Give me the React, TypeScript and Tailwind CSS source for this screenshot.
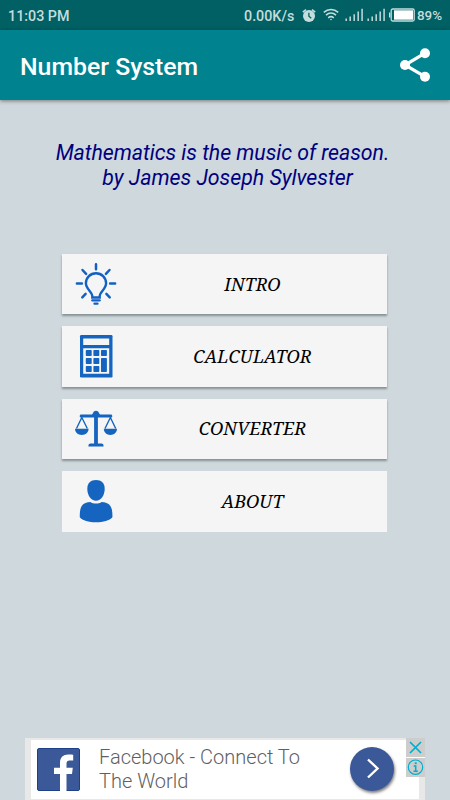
import type { ReactNode } from "react";

function BulbIcon() {
  return (
    <svg viewBox="0 0 42 44" className="w-[42px] h-[44px]" fill="none" stroke="#1260c4" strokeWidth="2.5" strokeLinecap="round">
      <path d="M21 2.2v5M1.9 21.5h5M35.1 21.5h5M7.5 8l3.6 3.8M34.5 8l-3.6 3.8M7.3 35.3l3.3-3.4M34.7 35.3l-3.3-3.4" />
      <path d="M17.3 35.5v-1.8c0-3.7-6.4-6.6-6.4-12.4a10.1 10.1 0 0 1 20.2 0c0 5.8-6.4 8.7-6.4 12.4v1.8z" strokeWidth="2.4" />
      <path d="M17.3 38.4h7.4M19.5 41.7h3" strokeWidth="2.3" />
    </svg>
  );
}

function CalculatorIcon() {
  return (
    <svg viewBox="0 0 42 44" className="w-[42px] h-[44px]">
      <rect x="5" y="0" width="32.5" height="42.5" rx="1.2" fill="#1565c0" />
      <path d="M8.2 3.6h26v6.4h-26zM8.2 13.2h26v25.6h-26z" fill="#f5f5f5" />
      <g fill="#1565c0">
        <rect x="10.8" y="15" width="5.9" height="6" rx=".7" />
        <rect x="18.4" y="15" width="5.9" height="6" rx=".7" />
        <rect x="26" y="15" width="5.9" height="6" rx=".7" />
        <rect x="10.8" y="23" width="5.9" height="6" rx=".7" />
        <rect x="18.4" y="23" width="5.9" height="6" rx=".7" />
        <rect x="10.8" y="31" width="5.9" height="6" rx=".7" />
        <rect x="18.4" y="31" width="5.9" height="6" rx=".7" />
        <rect x="26" y="23" width="5.9" height="14" rx=".7" />
      </g>
    </svg>
  );
}

function ScalesIcon() {
  return (
    <svg viewBox="0 0 42 44" className="w-[42px] h-[44px]" fill="#1565c0">
      <path d="M4.7 9.2c0-1 .6-1.6 1.5-1.6H16c1 0 1.5-.6 2-1.7.6-1.4 1.6-2.2 3-2.2s2.4.8 3 2.2c.5 1.1 1 1.7 2 1.7h9.8c.9 0 1.5.6 1.5 1.6s-.6 1.2-1.5 1.2H22.9V36.6h3.7c1.2 0 2 .9 2 2.9H13.4c0-2 .8-2.9 2-2.9h3.7V10.4H6.2c-.9 0-1.5-.2-1.5-1.2z" />
      <path d="M0 21.8h13.6c0 3.5-3 6.2-6.8 6.2S0 25.3 0 21.8zM28.8 21.8h13.2c0 3.5-3 6.2-6.6 6.2s-6.6-2.7-6.6-6.2z" />
      <path d="M1.5 21.5L6.8 10.5l5.5 11M30 21.5l5.4-11 5.3 11" fill="none" stroke="#1565c0" strokeWidth="1.4" />
    </svg>
  );
}

function PersonIcon() {
  return (
    <svg viewBox="0 0 42 44" className="w-[42px] h-[44px]" fill="#1565c0">
      <path d="M21 1c5.4 0 8.7 3 8.7 8.7 0 6.500-3.700 12-8.700 12s-8.700-5.500-8.700-12C12.300 4 15.600 1 21 1z" />
      <path d="M15.3 22.9c3.300 2 8.100 2 11.400 0 6.500.4 9.300 3.300 10.200 7.900.5 2.600.6 5.300.5 7.500-3 3.200-9 5-16.400 5S7.600 41.500 4.800 38.300c-.1-2.200 0-4.900.5-7.500.9-4.600 3.500-7.500 10-7.900z" />
    </svg>
  );
}

function SignalBars() {
  return (
    <svg viewBox="0 0 18 14" className="w-[18px] h-[14px]" stroke="#b4d3d4" strokeWidth="1.6">
      <path d="M1.2 13v-2.5M5.2 13v-4.5M9.2 13V6.3M13.2 13V3.5M17.1 13V.8" />
    </svg>
  );
}

function StatusBar() {
  return (
    <div className="flex h-[30px] items-center bg-[#006064] pl-2 font-medium text-[#c4dddd]">
      <span className="w-[236px] pt-[3px] text-[14.3px]">11:03 PM</span>
      <span className="w-[57px] pt-[3px] whitespace-nowrap text-[14.3px]">0.00K/s</span>
      <svg viewBox="0 0 14 15" className="ml-[1px] h-[15px] w-[14px]">
        <circle cx="7" cy="8" r="6" fill="#c4dddd" />
        <path d="M.8 4.2L4 1.6M13.2 4.2L10 1.6" stroke="#c4dddd" strokeWidth="1.6" />
        <path d="M6.9 4.8V8.2l2.400 2" stroke="#006064" strokeWidth="1.3" fill="none" />
      </svg>
      <svg viewBox="0 0 16 14" className="mr-[6px] ml-[7px] h-[14px] w-[16px]" fill="none" stroke="#c4dddd" strokeWidth="1.5">
        <path d="M.8 4.4c4.200-4 10.200-4 14.400 0M3 7.100c3-2.700 7-2.700 10 0M5.200 9.800c1.800-1.500 3.800-1.500 5.600 0" />
        <circle cx="8" cy="11.5" r=".8" fill="#c4dddd" stroke="none" />
      </svg>
      <SignalBars />
      <span className="w-[4px]" />
      <SignalBars />
      <svg viewBox="0 0 26 14" className="ml-[4px] h-[14px] w-[26px]">
        <rect x="2.2" y="1" width="23" height="12" rx="1.5" fill="none" stroke="#c4dddd" strokeWidth="1.3" />
        <path d="M.7 4.5v5" stroke="#c4dddd" strokeWidth="1.4" />
        <rect x="5" y="2.3" width="19" height="9.4" fill="#fff" />
      </svg>
      <span className="ml-[2px] pt-[2px] text-[13.4px]">89%</span>
    </div>
  );
}

function MenuButton({ label, icon }: { label: string; icon: ReactNode }) {
  return (
    <button className="flex h-[60.4px] w-[325px] items-center bg-[#f5f5f5] pl-[13px] shadow-[0_2px_2px_rgba(60,75,80,0.5)] last:shadow-none">
      {icon}
      <span className="flex-1 pl-px text-center font-['Noto_Serif','Liberation_Serif',serif] text-[18px] text-black italic">
        {label}
      </span>
    </button>
  );
}

function AdBanner() {
  return (
    <div className="relative flex h-[62px] w-[400px] border-x-[6px] border-t-[2px] border-b border-[#e8e8e8] bg-white">
      <svg viewBox="0 0 43 43" className="mt-[8px] ml-[6px] h-[43px] w-[43px]">
        <rect x=".5" y=".5" width="42" height="42" rx="1.5" fill="#3b5998" stroke="#1f3f86" />
        <path d="M23 43V26h-6v-6.300h6v-5c0-5.500 3.300-8.300 8.300-8.300 2.300 0 4.300.2 4.900.3v5.900h-3.500c-2.700 0-3.200 1.300-3.200 3.200v3.900h6.300L35 26h-5.500v17z" fill="#fff" />
      </svg>
      <p className="mt-[5px] ml-[19px] w-[235px] text-[20px] leading-[24px] font-light text-[#5f5f5f]">
        Facebook - Connect To
        <br />
        The World
      </p>
      <div className="mt-[7px] ml-[16px] flex h-[44px] w-[44px] items-center justify-center rounded-full bg-[#3b5998] shadow-[1px_2px_3px_rgba(0,0,0,0.5)]">
        <svg viewBox="0 0 14 22" className="ml-[2px] h-[22px] w-[14px]" fill="none" stroke="#fff" strokeWidth="2.4">
          <path d="M2 1.5L11.5 10.5 2 19.5" />
        </svg>
      </div>
      <div className="absolute -top-[2px] -right-[6px] flex w-[19px] flex-col gap-px bg-white">
        <svg viewBox="0 0 19 19" className="h-[19px] w-[19px] bg-[#cdcdcd]" stroke="#00aecd" strokeWidth="1.7">
          <path d="M4 4l11 11M15 4L4 15" />
        </svg>
        <svg viewBox="0 0 19 19" className="h-[19px] w-[19px] bg-[#cdcdcd]" fill="none" stroke="#00aecd">
          <circle cx="9.5" cy="9.2" r="7.2" strokeWidth="1.2" />
          <path d="M7.7 8h2v5.2M7.5 13.3h4.3" strokeWidth="1.5" />
          <path d="M8.7 5.2h2" strokeWidth="1.9" />
        </svg>
      </div>
    </div>
  );
}

export default function App() {
  return (
    <div className="flex h-[800px] w-[450px] flex-col overflow-hidden bg-[#cfd8dc] font-['Roboto',sans-serif]">
      <StatusBar />
      <header className="flex h-[70px] items-center justify-between bg-[#00838f] pr-[20px] pl-5 shadow-[0_1px_4px_rgba(0,0,0,0.45)]">
        <h1 className="pt-[3px] text-[24.8px] font-medium text-white">Number System</h1>
        <svg viewBox="0 0 30 34" className="h-[34px] w-[30px]" fill="#fff">
          <path d="M25 5.2L5 17l20 11.7" fill="none" stroke="#fff" strokeWidth="3.2" />
          <circle cx="25" cy="5.2" r="5" />
          <circle cx="5" cy="17" r="5" />
          <circle cx="25" cy="28.7" r="5" />
        </svg>
      </header>

      {/* Quote */}
      <p className="mt-[40px] pl-[5px] text-center text-[21.3px] leading-[25px] text-[#000080] italic">
        <span className="mr-[10px] tracking-[-0.04px]">Mathematics is the music of reason.</span>
        <br />
        by James Joseph Sylvester
      </p>

      {/* Menu */}
      <nav className="mt-[64px] flex flex-1 flex-col items-center gap-[12px] pr-px">
        <MenuButton label="INTRO" icon={<BulbIcon />} />
        <MenuButton label="CALCULATOR" icon={<CalculatorIcon />} />
        <MenuButton label="CONVERTER" icon={<ScalesIcon />} />
        <MenuButton label="ABOUT" icon={<PersonIcon />} />
      </nav>

      <footer className="flex justify-center">
        <AdBanner />
      </footer>
    </div>
  );
}
